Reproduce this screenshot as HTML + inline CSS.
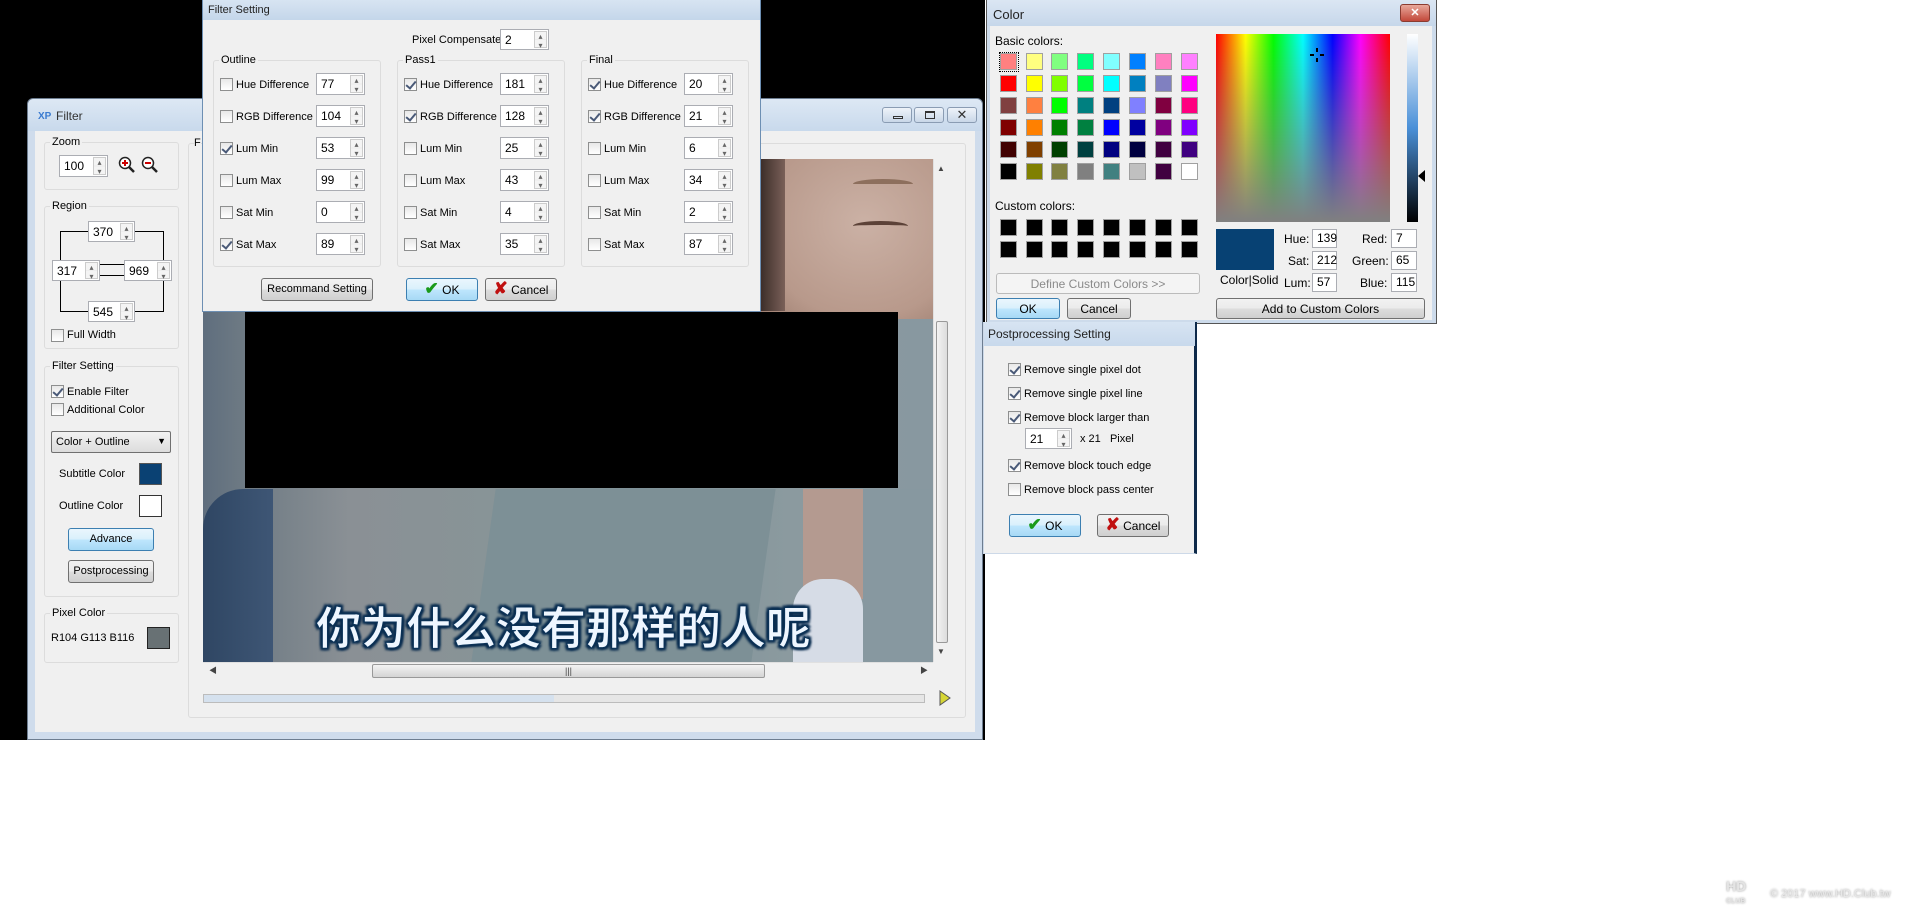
<!DOCTYPE html>
<html><head><meta charset="utf-8"><style>
*{margin:0;padding:0;box-sizing:border-box}
body{width:1920px;height:920px;background:#fff;position:relative;overflow:hidden;font-family:"Liberation Sans","Noto Sans CJK SC",sans-serif;font-size:11px;color:#000}
.a{position:absolute}
.t{position:absolute;white-space:nowrap;line-height:14px}
.cd .t,.cd.t{font-size:12px}
.cb{position:absolute;width:13px;height:13px;border:1px solid #8e8f8f;background:linear-gradient(#e8e8e8,#fff)}
.cb.c::after{content:"";position:absolute;left:3px;top:0px;width:4px;height:8px;border:solid #4a5a78;border-width:0 2px 2px 0;transform:rotate(40deg)}
.sp{position:absolute;height:22px;border:1px solid #abadb3;background:#fff;padding:3px 0 0 4px;line-height:14px;font-size:12px}
.sp::after{content:"▴\A▾";white-space:pre;font-size:8px;line-height:9px;color:#666;text-align:center;position:absolute;right:1px;top:1px;width:11px;bottom:1px;border:1px solid #ccc;background:linear-gradient(#f4f4f4 0,#f4f4f4 48%,#ccc 50%,#f4f4f4 52%)}
.sp.n::after{display:none}
.btn{position:absolute;border:1px solid #707070;border-radius:3px;background:linear-gradient(#f2f2f2,#ebebeb 50%,#dddddd 51%,#cfcfcf);text-align:center;line-height:20px}
.btn.bl{border-color:#3c7fb1;background:linear-gradient(#eaf6fd,#d9f0fc 50%,#bee6fd 51%,#a7d9f5)}
.grp{position:absolute;border:1px solid #dcdcdc;border-radius:3px}
.grp>span{position:absolute;left:5px;top:-8px;background:#f0f0f0;padding:0 2px;line-height:14px}
.sw{position:absolute;width:17px;height:17px;border:1px solid #a0a0a0}
</style></head><body>
<div class="a" style="left:0;top:0;width:985px;height:740px;background:#000"></div>

<!-- Filter main window -->
<div class="a" style="left:27px;top:98px;width:956px;height:642px;background:#cfdcec;border:1px solid #6d7d90;border-radius:6px 6px 0 0"></div>
<div class="a" style="left:28px;top:99px;width:954px;height:32px;background:linear-gradient(#dde8f4,#c8d9ec);border-radius:6px 6px 0 0"></div>
<div class="t" style="left:38px;top:110px;font-size:10px;color:#3b7bd0;font-weight:bold">XP</div>
<div class="t" style="left:56px;top:109px;font-size:12px;color:#333">Filter</div>
<div class="a" style="left:882px;top:107px;width:30px;height:16px;border:1px solid #8a9cb3;border-radius:3px;background:linear-gradient(#eef3f9,#c9d7e8)"><div class="a" style="left:10px;top:8px;width:10px;height:3px;border:1px solid #333"></div></div>
<div class="a" style="left:914px;top:107px;width:30px;height:16px;border:1px solid #8a9cb3;border-radius:3px;background:linear-gradient(#eef3f9,#c9d7e8)"><div class="a" style="left:10px;top:3px;width:10px;height:8px;border:1px solid #333;border-top-width:2px"></div></div>
<div class="a" style="left:947px;top:107px;width:30px;height:16px;border:1px solid #8a9cb3;border-radius:3px;background:linear-gradient(#eef3f9,#c9d7e8);text-align:center;line-height:14px;font-size:13px;color:#333">✕</div>
<div class="a" style="left:35px;top:131px;width:940px;height:601px;background:#f0f0f0"></div>

<div class="grp" style="left:44px;top:142px;width:135px;height:48px"><span>Zoom</span></div>
<div class="sp" style="left:59px;top:155px;width:49px">100</div>
<svg class="a" style="left:118px;top:156px" width="42" height="20"><circle cx="7" cy="7" r="5.5" fill="#fff" stroke="#222" stroke-width="1.5"/><path d="M4 7h6M7 4v6" stroke="#c00" stroke-width="2"/><path d="M11 11l5 5" stroke="#222" stroke-width="2.5"/><circle cx="30" cy="7" r="5.5" fill="#fff" stroke="#222" stroke-width="1.5"/><path d="M27 7h6" stroke="#c00" stroke-width="2"/><path d="M34 11l5 5" stroke="#222" stroke-width="2.5"/></svg>

<div class="grp" style="left:44px;top:206px;width:135px;height:143px"><span>Region</span></div>
<div class="a" style="left:60px;top:231px;width:104px;height:81px;border:1px solid #000"></div>
<div class="a" style="left:100px;top:264px;width:24px;height:12px;border-top:1px solid #000;border-bottom:1px solid #000"></div>
<div class="sp" style="left:88px;top:221px;width:47px;height:21px">370</div>
<div class="sp" style="left:52px;top:260px;width:48px;height:21px">317</div>
<div class="sp" style="left:124px;top:260px;width:48px;height:21px">969</div>
<div class="sp" style="left:88px;top:301px;width:47px;height:21px">545</div>
<div class="cb" style="left:51px;top:329px"></div><div class="t" style="left:67px;top:328px">Full Width</div>

<div class="grp" style="left:44px;top:366px;width:135px;height:231px"><span>Filter Setting</span></div>
<div class="cb c" style="left:51px;top:385px"></div><div class="t" style="left:67px;top:385px">Enable Filter</div>
<div class="cb" style="left:51px;top:403px"></div><div class="t" style="left:67px;top:403px">Additional Color</div>
<div class="a" style="left:51px;top:431px;width:120px;height:22px;border:1px solid #707070;border-radius:2px;background:linear-gradient(#f2f2f2,#dcdcdc);padding:3px 0 0 4px;line-height:14px">Color + Outline<span style="position:absolute;right:4px;top:2px;font-size:9px">▼</span></div>
<div class="t" style="left:59px;top:467px">Subtitle Color</div>
<div class="a" style="left:139px;top:463px;width:23px;height:22px;background:#0a4173;border:1px solid #555"></div>
<div class="t" style="left:59px;top:499px">Outline Color</div>
<div class="a" style="left:139px;top:495px;width:23px;height:22px;background:#fff;border:1px solid #333"></div>
<div class="btn bl" style="left:68px;top:528px;width:86px;height:23px">Advance</div>
<div class="btn" style="left:68px;top:560px;width:86px;height:23px">Postprocessing</div>

<div class="grp" style="left:44px;top:613px;width:135px;height:50px"><span>Pixel Color</span></div>
<div class="t" style="left:51px;top:631px">R104 G113 B116</div>
<div class="a" style="left:147px;top:627px;width:23px;height:22px;background:#687174;border:1px solid #222"></div>

<div class="grp" style="left:188px;top:143px;width:778px;height:575px"></div>
<div class="t" style="left:194px;top:136px;background:#f0f0f0">F</div>
<!-- video -->
<div class="a" style="left:203px;top:159px;width:730px;height:503px;background:linear-gradient(90deg,#5f6e7e 0,#6f7b84 6%,#8a9095 20%,#889497 40%,#7e9198 60%,#8b9a9f 80%,#8898a0 100%);overflow:hidden">
  <div class="a" style="left:0;top:330px;width:70px;height:180px;background:linear-gradient(90deg,#2f4663,#3e5675);border-radius:40px 0 0 0"></div>
  <div class="a" style="left:280px;top:330px;width:280px;height:180px;background:#7d9096;transform:skewX(-8deg)"></div>
  <div class="a" style="left:600px;top:330px;width:60px;height:110px;background:#b49a90"></div>
  <div class="a" style="left:590px;top:420px;width:70px;height:90px;background:#d6dce6;border-radius:30px 30px 0 0"></div>
  <div class="a" style="left:660px;top:330px;width:70px;height:180px;background:#8798a0"></div>
  <div class="a" style="left:557px;top:0;width:173px;height:160px;background:radial-gradient(ellipse at 60% 40%,#cbb1a5,#b8998b 70%,#9d7e70)"></div>
  <div class="a" style="left:557px;top:0;width:25px;height:152px;background:linear-gradient(90deg,#3a2c28,#7a6058)"></div>
  <div class="a" style="left:650px;top:20px;width:60px;height:10px;border-top:5px solid #8d6f5d;border-radius:50%"></div>
  <div class="a" style="left:650px;top:62px;width:55px;height:10px;border-top:4px solid #5c4238;border-radius:50%"></div>
</div>
<div class="a" style="left:245px;top:312px;width:653px;height:176px;background:#000"></div>
<div class="t" style="left:316px;top:603px;font-size:45px;line-height:52px;font-weight:bold;color:#eef6ff;-webkit-text-stroke:1px #0c3358;text-shadow:0 0 3px #0a2d50,2px 2px 2px #0a2d50,-2px -2px 2px #0a2d50,2px -2px 2px #0a2d50,-2px 2px 2px #0a2d50">你为什么没有那样的人呢</div>
<div class="a" style="left:933px;top:159px;width:17px;height:503px;background:#f0f0f0;border-left:1px solid #e0e0e0"></div>
<div class="t" style="left:937px;top:162px;font-size:8px;color:#444">▲</div>
<div class="a" style="left:936px;top:321px;width:12px;height:322px;border:1px solid #999;border-radius:2px;background:linear-gradient(90deg,#f3f3f3,#dcdcdc)"></div>
<div class="t" style="left:937px;top:645px;font-size:8px;color:#444">▼</div>
<div class="a" style="left:203px;top:662px;width:730px;height:17px;background:#f0f0f0;border-top:1px solid #e0e0e0"></div>
<div class="t" style="left:209px;top:664px;font-size:8px;color:#444">◀</div>
<div class="a" style="left:372px;top:664px;width:393px;height:14px;border:1px solid #999;border-radius:2px;background:linear-gradient(#f3f3f3,#d4d4d4);text-align:center;font-size:9px;line-height:12px;color:#444">|||</div>
<div class="t" style="left:920px;top:664px;font-size:8px;color:#444">▶</div>
<div class="a" style="left:203px;top:694px;width:722px;height:9px;border:1px solid #bcbcbc;background:#e6e6e6"><div style="width:350px;height:7px;background:#d5e1ee"></div></div>
<svg class="a" style="left:938px;top:690px" width="14" height="16"><path d="M2 1L12 8L2 15Z" fill="#d6d636" stroke="#555"/></svg>

<!-- Filter Setting dialog -->
<div class="a" style="left:202px;top:0;width:559px;height:312px;background:#f0f0f0;border:1px solid #6d8fb3;border-top:none"></div>
<div class="a" style="left:203px;top:0;width:557px;height:20px;background:linear-gradient(#d7e4f2,#c4d6ea)"></div>
<div class="t" style="left:208px;top:3px;color:#222">Filter Setting</div>
<div class="t" style="left:412px;top:33px;width:85px;text-align:right">Pixel Compensate</div>
<div class="sp" style="left:500px;top:29px;width:49px;height:21px">2</div>

<div class="grp" style="left:213px;top:60px;width:168px;height:207px"><span>Outline</span></div>
<div class="grp" style="left:397px;top:60px;width:168px;height:207px"><span>Pass1</span></div>
<div class="grp" style="left:581px;top:60px;width:168px;height:207px"><span>Final</span></div>

<div class="cb" style="left:220px;top:78px"></div><div class="t" style="left:236px;top:78px">Hue Difference</div><div class="sp" style="left:316px;top:73px;width:49px">77</div>
<div class="cb" style="left:220px;top:110px"></div><div class="t" style="left:236px;top:110px">RGB Difference</div><div class="sp" style="left:316px;top:105px;width:49px">104</div>
<div class="cb c" style="left:220px;top:142px"></div><div class="t" style="left:236px;top:142px">Lum Min</div><div class="sp" style="left:316px;top:137px;width:49px">53</div>
<div class="cb" style="left:220px;top:174px"></div><div class="t" style="left:236px;top:174px">Lum Max</div><div class="sp" style="left:316px;top:169px;width:49px">99</div>
<div class="cb" style="left:220px;top:206px"></div><div class="t" style="left:236px;top:206px">Sat Min</div><div class="sp" style="left:316px;top:201px;width:49px">0</div>
<div class="cb c" style="left:220px;top:238px"></div><div class="t" style="left:236px;top:238px">Sat Max</div><div class="sp" style="left:316px;top:233px;width:49px">89</div>
<div class="cb c" style="left:404px;top:78px"></div><div class="t" style="left:420px;top:78px">Hue Difference</div><div class="sp" style="left:500px;top:73px;width:49px">181</div>
<div class="cb c" style="left:404px;top:110px"></div><div class="t" style="left:420px;top:110px">RGB Difference</div><div class="sp" style="left:500px;top:105px;width:49px">128</div>
<div class="cb" style="left:404px;top:142px"></div><div class="t" style="left:420px;top:142px">Lum Min</div><div class="sp" style="left:500px;top:137px;width:49px">25</div>
<div class="cb" style="left:404px;top:174px"></div><div class="t" style="left:420px;top:174px">Lum Max</div><div class="sp" style="left:500px;top:169px;width:49px">43</div>
<div class="cb" style="left:404px;top:206px"></div><div class="t" style="left:420px;top:206px">Sat Min</div><div class="sp" style="left:500px;top:201px;width:49px">4</div>
<div class="cb" style="left:404px;top:238px"></div><div class="t" style="left:420px;top:238px">Sat Max</div><div class="sp" style="left:500px;top:233px;width:49px">35</div>
<div class="cb c" style="left:588px;top:78px"></div><div class="t" style="left:604px;top:78px">Hue Difference</div><div class="sp" style="left:684px;top:73px;width:49px">20</div>
<div class="cb c" style="left:588px;top:110px"></div><div class="t" style="left:604px;top:110px">RGB Difference</div><div class="sp" style="left:684px;top:105px;width:49px">21</div>
<div class="cb" style="left:588px;top:142px"></div><div class="t" style="left:604px;top:142px">Lum Min</div><div class="sp" style="left:684px;top:137px;width:49px">6</div>
<div class="cb" style="left:588px;top:174px"></div><div class="t" style="left:604px;top:174px">Lum Max</div><div class="sp" style="left:684px;top:169px;width:49px">34</div>
<div class="cb" style="left:588px;top:206px"></div><div class="t" style="left:604px;top:206px">Sat Min</div><div class="sp" style="left:684px;top:201px;width:49px">2</div>
<div class="cb" style="left:588px;top:238px"></div><div class="t" style="left:604px;top:238px">Sat Max</div><div class="sp" style="left:684px;top:233px;width:49px">87</div>

<div class="btn" style="left:261px;top:278px;width:112px;height:23px">Recommand Setting</div>
<div class="btn bl" style="left:406px;top:278px;width:72px;height:23px;font-size:12px"><span style="color:#1a9a1a;font-size:17px;font-weight:bold">✔</span> OK</div>
<div class="btn" style="left:485px;top:278px;width:72px;height:23px;font-size:12px"><span style="color:#c01010;font-size:17px;font-weight:bold">✘</span> Cancel</div>

<!-- Color dialog -->
<div class="cd">
<div class="a" style="left:986px;top:0;width:451px;height:324px;background:#cddbeb;border:1px solid #555;border-top:none"></div>
<div class="a" style="left:987px;top:0;width:449px;height:26px;background:linear-gradient(#dbe6f3,#c6d7ea)"></div>
<div class="t" style="left:993px;top:8px;font-size:13px;color:#222">Color</div>
<div class="a" style="left:1400px;top:4px;width:30px;height:18px;border:1px solid #8a3b30;border-radius:3px;background:linear-gradient(#e8a89b,#c2483a);color:#fff;text-align:center;font-weight:bold;line-height:16px">✕</div>
<div class="a" style="left:990px;top:26px;width:442px;height:294px;background:#f0f0f0"></div>
<div class="t" style="left:995px;top:34px">Basic colors:</div>
<div class="t" style="left:995px;top:199px">Custom colors:</div>
<div class="btn" style="left:996px;top:273px;width:204px;height:21px;background:#f4f4f4;border-color:#bbb;color:#8a8a8a;font-size:12px">Define Custom Colors &gt;&gt;</div>
<div class="btn bl" style="left:996px;top:298px;width:64px;height:21px;font-size:12px">OK</div>
<div class="btn" style="left:1067px;top:298px;width:64px;height:21px;font-size:12px">Cancel</div>
<div class="a" style="left:1216px;top:34px;width:174px;height:188px;background:linear-gradient(rgba(128,128,128,0),#808080),linear-gradient(90deg,#f00,#ff0 17%,#0f0 33%,#0ff 50%,#00f 67%,#f0f 83%,#f00)"></div>
<svg class="a" style="left:1309px;top:47px" width="16" height="16"><path d="M8 1v4M8 11v4M1 8h4M11 8h4" stroke="#000" stroke-width="2"/></svg>
<div class="a" style="left:1407px;top:34px;width:11px;height:188px;background:linear-gradient(#fff,#4a90d8 50%,#000)"></div>
<svg class="a" style="left:1418px;top:170px" width="8" height="12"><path d="M7 0L0 6L7 12Z" fill="#000"/></svg>
<div class="a" style="left:1216px;top:229px;width:58px;height:41px;background:#074173"></div>
<div class="t" style="left:1220px;top:273px">Color|Solid</div>
<div class="t" style="left:1284px;top:232px">Hue:</div><div class="sp n" style="left:1312px;top:229px;width:25px;height:19px;padding-top:1px">139</div>
<div class="t" style="left:1288px;top:254px">Sat:</div><div class="sp n" style="left:1312px;top:251px;width:25px;height:19px;padding-top:1px">212</div>
<div class="t" style="left:1284px;top:276px">Lum:</div><div class="sp n" style="left:1312px;top:273px;width:25px;height:19px;padding-top:1px">57</div>
<div class="t" style="left:1362px;top:232px">Red:</div><div class="sp n" style="left:1391px;top:229px;width:26px;height:19px;padding-top:1px">7</div>
<div class="t" style="left:1352px;top:254px">Green:</div><div class="sp n" style="left:1391px;top:251px;width:26px;height:19px;padding-top:1px">65</div>
<div class="t" style="left:1360px;top:276px">Blue:</div><div class="sp n" style="left:1391px;top:273px;width:26px;height:19px;padding-top:1px">115</div>
<div class="btn" style="left:1216px;top:298px;width:209px;height:21px;font-size:12px">Add to Custom Colors</div>
</div>

<!-- Postprocessing -->
<div class="a" style="left:983px;top:322px;width:214px;height:232px;background:#f0f0f0;border-right:3px solid #0e2a4a;border-left:1px solid #cdd9e8;border-bottom:1px solid #cdd9e8"></div>
<div class="a" style="left:984px;top:322px;width:211px;height:24px;background:linear-gradient(#d7e4f2,#c8d9ec)"></div>
<div class="t" style="left:988px;top:327px;color:#222;font-size:12px">Postprocessing Setting</div>
<div class="cb c" style="left:1008px;top:363px"></div><div class="t" style="left:1024px;top:363px">Remove single pixel dot</div>
<div class="cb c" style="left:1008px;top:387px"></div><div class="t" style="left:1024px;top:387px">Remove single pixel line</div>
<div class="cb c" style="left:1008px;top:411px"></div><div class="t" style="left:1024px;top:411px">Remove block larger than</div>
<div class="sp" style="left:1025px;top:428px;width:47px;height:21px">21</div>
<div class="t" style="left:1080px;top:432px">x 21 &nbsp; Pixel</div>
<div class="cb c" style="left:1008px;top:459px"></div><div class="t" style="left:1024px;top:459px">Remove block touch edge</div>
<div class="cb" style="left:1008px;top:483px"></div><div class="t" style="left:1024px;top:483px">Remove block pass center</div>
<div class="btn bl" style="left:1009px;top:514px;width:72px;height:23px;font-size:12px"><span style="color:#1a9a1a;font-size:17px;font-weight:bold">✔</span> OK</div>
<div class="btn" style="left:1097px;top:514px;width:72px;height:23px;font-size:12px"><span style="color:#c01010;font-size:17px;font-weight:bold">✘</span> Cancel</div>

<!-- watermark -->
<div class="t" style="left:1726px;top:880px;font-size:14px;font-weight:bold;color:#e4e4e4;text-shadow:0 0 2px #999;line-height:12px">HD<br><span style="font-size:7px">CLUB</span></div>
<div class="t" style="left:1770px;top:887px;font-size:11px;color:#e8e8e8;text-shadow:0 0 2px #888">© 2017 www.HD.Club.tw</div>

<div class="a" style="left:999px;top:52px;width:20px;height:20px;border:1px dotted #000"></div>
<div class="sw" style="left:1000px;top:53px;background:#ff8080"></div><div class="sw" style="left:1026px;top:53px;background:#ffff80"></div><div class="sw" style="left:1051px;top:53px;background:#80ff80"></div><div class="sw" style="left:1077px;top:53px;background:#00ff80"></div><div class="sw" style="left:1103px;top:53px;background:#80ffff"></div><div class="sw" style="left:1129px;top:53px;background:#0080ff"></div><div class="sw" style="left:1155px;top:53px;background:#ff80c0"></div><div class="sw" style="left:1181px;top:53px;background:#ff80ff"></div>
<div class="sw" style="left:1000px;top:75px;background:#ff0000"></div><div class="sw" style="left:1026px;top:75px;background:#ffff00"></div><div class="sw" style="left:1051px;top:75px;background:#80ff00"></div><div class="sw" style="left:1077px;top:75px;background:#00ff40"></div><div class="sw" style="left:1103px;top:75px;background:#00ffff"></div><div class="sw" style="left:1129px;top:75px;background:#0080c0"></div><div class="sw" style="left:1155px;top:75px;background:#8080c0"></div><div class="sw" style="left:1181px;top:75px;background:#ff00ff"></div>
<div class="sw" style="left:1000px;top:97px;background:#804040"></div><div class="sw" style="left:1026px;top:97px;background:#ff8040"></div><div class="sw" style="left:1051px;top:97px;background:#00ff00"></div><div class="sw" style="left:1077px;top:97px;background:#008080"></div><div class="sw" style="left:1103px;top:97px;background:#004080"></div><div class="sw" style="left:1129px;top:97px;background:#8080ff"></div><div class="sw" style="left:1155px;top:97px;background:#800040"></div><div class="sw" style="left:1181px;top:97px;background:#ff0080"></div>
<div class="sw" style="left:1000px;top:119px;background:#800000"></div><div class="sw" style="left:1026px;top:119px;background:#ff8000"></div><div class="sw" style="left:1051px;top:119px;background:#008000"></div><div class="sw" style="left:1077px;top:119px;background:#008040"></div><div class="sw" style="left:1103px;top:119px;background:#0000ff"></div><div class="sw" style="left:1129px;top:119px;background:#0000a0"></div><div class="sw" style="left:1155px;top:119px;background:#800080"></div><div class="sw" style="left:1181px;top:119px;background:#8000ff"></div>
<div class="sw" style="left:1000px;top:141px;background:#400000"></div><div class="sw" style="left:1026px;top:141px;background:#804000"></div><div class="sw" style="left:1051px;top:141px;background:#004000"></div><div class="sw" style="left:1077px;top:141px;background:#004040"></div><div class="sw" style="left:1103px;top:141px;background:#000080"></div><div class="sw" style="left:1129px;top:141px;background:#000040"></div><div class="sw" style="left:1155px;top:141px;background:#400040"></div><div class="sw" style="left:1181px;top:141px;background:#400080"></div>
<div class="sw" style="left:1000px;top:163px;background:#000000"></div><div class="sw" style="left:1026px;top:163px;background:#808000"></div><div class="sw" style="left:1051px;top:163px;background:#808040"></div><div class="sw" style="left:1077px;top:163px;background:#808080"></div><div class="sw" style="left:1103px;top:163px;background:#408080"></div><div class="sw" style="left:1129px;top:163px;background:#c0c0c0"></div><div class="sw" style="left:1155px;top:163px;background:#400040"></div><div class="sw" style="left:1181px;top:163px;background:#ffffff"></div>
<div class="sw" style="left:1000px;top:219px;background:#000"></div><div class="sw" style="left:1026px;top:219px;background:#000"></div><div class="sw" style="left:1051px;top:219px;background:#000"></div><div class="sw" style="left:1077px;top:219px;background:#000"></div><div class="sw" style="left:1103px;top:219px;background:#000"></div><div class="sw" style="left:1129px;top:219px;background:#000"></div><div class="sw" style="left:1155px;top:219px;background:#000"></div><div class="sw" style="left:1181px;top:219px;background:#000"></div>
<div class="sw" style="left:1000px;top:241px;background:#000"></div><div class="sw" style="left:1026px;top:241px;background:#000"></div><div class="sw" style="left:1051px;top:241px;background:#000"></div><div class="sw" style="left:1077px;top:241px;background:#000"></div><div class="sw" style="left:1103px;top:241px;background:#000"></div><div class="sw" style="left:1129px;top:241px;background:#000"></div><div class="sw" style="left:1155px;top:241px;background:#000"></div><div class="sw" style="left:1181px;top:241px;background:#000"></div>
</body></html>
